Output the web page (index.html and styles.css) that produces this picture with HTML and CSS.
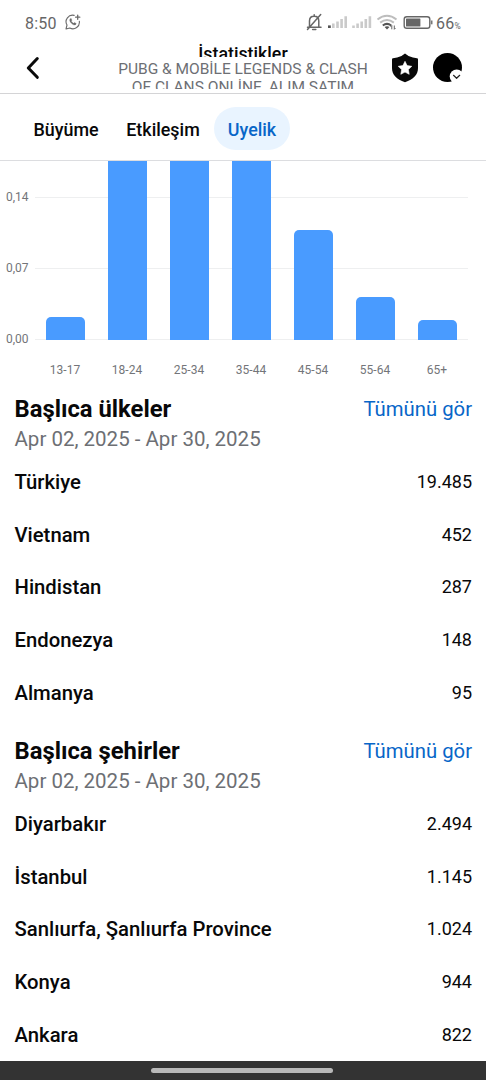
FILE: index.html
```html
<!DOCTYPE html>
<html lang="tr">
<head>
<meta charset="utf-8">
<title>İstatistikler</title>
<link rel="stylesheet" href="styles.css">
</head>
<body>
<div class="screen">
  <div class="status">
    <span class="clock">8:50</span>
    <svg class="wa" width="16" height="16" viewBox="0 0 16 16" fill="none" stroke="#6b6b6b" stroke-width="1.1" stroke-linecap="round" stroke-linejoin="round">
      <path d="M9.2 1.4A6.5 6.5 0 0 0 2 11L1 15l3.800-1A6.500 6.500 0 0 0 14.300 7.200"/>
      <path d="M5.200 4.700c-1 1.100-.5 2.700 1 4.400 1.700 1.800 3.500 2.500 4.700 1.300l.3-.9-1.700-1-.9.800c-1.100-.3-2-1.300-2.300-2.200l.6-.9-.7-1.600z" fill="#6b6b6b" stroke-width=".3"/>
      <path d="M12.700 1.100v4.200M10.600 3.200h4.200" stroke-width="1.300"/>
    </svg>
    <svg class="indicators" width="128" height="20" viewBox="305 13 128 20" fill="none">
      <g stroke="#666" stroke-width="1.500" stroke-linecap="round" stroke-linejoin="round">
        <path d="M309.500 26.600V21c0-3 1.900-4.700 4.600-4.700s4.700 1.700 4.700 4.700v5.200M307.500 27.200H321M314.200 14.700v1.500M320.700 14.500 307.500 29.500"/>
        <path d="M312.600 29.500h3.200"/>
      </g>
      <g fill="#cacaca">
        <path d="M332 23.500h2.600V28H332zM336.200 21.500h2.600V28h-2.600zM340.300 19h2.600v9h-2.600zM344.400 16.200h2.600V28h-2.600z"/>
        <path d="M352.200 25.500h2.600V28h-2.600zM356.300 23.500h2.600V28h-2.600zM360.400 21.500h2.600V28h-2.600zM364.500 19h2.600v9h-2.600zM368.600 16.200h2.600V28h-2.600z"/>
      </g>
      <rect x="328" y="25.400" width="2.800" height="2.600" fill="#555"/>
      <path d="M377.500 19.500q9.500-7.400 19 0" stroke="#bdbdbd" stroke-width="2"/>
      <path d="M380.200 22.600q6.800-5.200 13.600 0" stroke="#bdbdbd" stroke-width="2"/>
      <path d="M382.800 25.500q4.200-3.300 8.400 0" stroke="#555" stroke-width="2"/>
      <path d="M384.600 27q2.500-1.700 4.900 0l-2.500 2.500z" fill="#555"/>
      <path d="M391.800 29.300v-3.800l-1.200 1.300M394.300 25.500v3.800l1.200-1.300" stroke="#666"/>
      <rect x="404.200" y="16.700" width="25.600" height="11.600" rx="2.600" stroke="#666" stroke-width="1.400"/>
      <rect x="406" y="18.500" width="14.400" height="8" rx=".6" fill="#666"/>
      <path d="M431.700 20.500v3.800" stroke="#777" stroke-width="1.600"/>
    </svg>
    <span class="level">66<small>%</small></span>
  </div>

  <header class="header">
    <svg class="back" width="16" height="26" viewBox="0 0 16 26" fill="none" stroke="#0a0a0a" stroke-width="3" stroke-linecap="round" stroke-linejoin="round"><path d="M13.300 3.500 4.300 13l9 9.300"/></svg>
    <div class="titles">
      <div class="title">İstatistikler</div>
      <div class="subtitle">PUBG &amp; MOBİLE LEGENDS &amp; CLASH<br>OF CLANS ONLİNE, ALIM SATIM</div>
    </div>
    <svg class="shield" width="28" height="30" viewBox="0 0 28 30">
      <path d="M14 .5 10.500 3Q6 5 2 5.200 1 5.300 1 6.500V15c0 7 4.500 11 13 14.300C22.500 26 27 22 27 15V6.500Q27 5.300 26 5.200 22 5 17.500 3z" fill="#080808"/>
      <path d="m14 8.300 2.100 4.300 4.700.7-3.400 3.300.8 4.700-4.200-2.200-4.200 2.200.8-4.700-3.400-3.300 4.700-.7z" fill="#fff" stroke="#fff" stroke-width=".6" stroke-linejoin="round"/>
    </svg>
    <svg class="avatar" width="32" height="32" viewBox="0 0 32 32">
      <circle cx="15.500" cy="15.500" r="14.500" fill="#000"/>
      <circle cx="24.700" cy="24.500" r="7" fill="#fff"/>
      <path d="m21.500 23.300 3.100 3 3.100-3" fill="none" stroke="#222" stroke-width="1.200" stroke-linecap="round" stroke-linejoin="round"/>
    </svg>
  </header>

  <nav class="tabs">
    <a class="tab t1"><span>Büyüme</span></a>
    <a class="tab t2"><span>Etkileşim</span></a>
    <a class="tab t3 active"><span>Uyelik</span></a>
  </nav>

  <section class="chart">
    <div class="plot">
      <div class="axis"><span>0,14</span><span>0,07</span><span>0,00</span></div>
      <div class="bars">
        <i style="height:23.500px"></i>
        <i class="cut"></i>
        <i class="cut"></i>
        <i class="cut"></i>
        <i style="height:110px"></i>
        <i style="height:43.500px"></i>
        <i style="height:20px"></i>
      </div>
    </div>
    <div class="ages"><span>13-17</span><span>18-24</span><span>25-34</span><span>35-44</span><span>45-54</span><span>55-64</span><span>65+</span></div>
  </section>

  <section class="list">
    <div class="head"><h2>Başlıca ülkeler</h2><a>Tümünü gör</a></div>
    <p class="range">Apr 02, 2025 - Apr 30, 2025</p>
    <div class="row"><b>Türkiye</b><span>19.485</span></div>
    <div class="row"><b>Vietnam</b><span>452</span></div>
    <div class="row"><b>Hindistan</b><span>287</span></div>
    <div class="row"><b>Endonezya</b><span>148</span></div>
    <div class="row"><b>Almanya</b><span>95</span></div>
  </section>

  <section class="list last">
    <div class="head"><h2>Başlıca şehirler</h2><a>Tümünü gör</a></div>
    <p class="range">Apr 02, 2025 - Apr 30, 2025</p>
    <div class="row"><b>Diyarbakır</b><span>2.494</span></div>
    <div class="row"><b>İstanbul</b><span>1.145</span></div>
    <div class="row"><b>Sanlıurfa, Şanlıurfa Province</b><span>1.024</span></div>
    <div class="row"><b>Konya</b><span>944</span></div>
    <div class="row"><b>Ankara</b><span>822</span></div>
  </section>

  <footer class="navbar"><div class="handle"></div></footer>
</div>
</body>
</html>
```
FILE: styles.css
```css
* { box-sizing: border-box; }
body { margin: 0; background: #fff; font-family: Roboto, "Liberation Sans", sans-serif; color: #080809; }
.screen { width: 486px; height: 1080px; overflow: hidden; display: flex; flex-direction: column; }
.screen > * { flex-shrink: 0; }

.status { height: 43px; display: flex; align-items: center; padding: 3px 24px 0 25px; color: #666; font-size: 16px; }
.clock { letter-spacing: .2px; width: 40px; }
.wa { margin-top: -3px; }
.indicators { margin-left: 224px; }
.level { margin-left: 3px; letter-spacing: .2px; white-space: nowrap; }
.level small { font-size: 8.500px; }

.header { height: 51px; border-bottom: 1px solid #d4d4d6; display: flex; align-items: flex-start; padding-left: 24px; }
.back { margin-top: 12px; }
.titles { width: 256px; margin-left: 75px; height: 46px; overflow: hidden; text-align: center; }
.title { height: 14px; line-height: 21px; overflow: hidden; font-size: 17.800px; font-weight: 500; }
.subtitle { margin-top: 3px; font-size: 15.500px; line-height: 18px; color: #6d6f74; white-space: nowrap; }
.shield { margin: 10px 0 0 20px; }
.avatar { margin: 9px 0 0 13px; }

.tabs { height: 67px; border-bottom: 1px solid #dcdde0; display: flex; align-items: center; padding-left: 18px; font-size: 17.900px; font-weight: 500; }
.tab { height: 43px; border-radius: 22px; display: flex; align-items: center; justify-content: center; margin-top: 3px; padding-top: 1px; }
.t1 { width: 96px; }
.t2 { width: 98px; }
.t3 { width: 76px; margin-left: 2px; }
.active { background: #e9f4ff; color: #0866c8; }

.chart { height: 225px; }
.plot { height: 179px; display: flex; }
.axis { width: 35px; padding-left: 6px; font-size: 12px; color: #737579; line-height: 71.300px; padding-top: .6px; }
.axis span { display: block; }
.bars { width: 433px; display: grid; grid-template-columns: repeat(7, 62px); align-items: end; justify-items: center; background: linear-gradient(#eeeff0, #eeeff0) 0 36px / 100% 1px no-repeat, linear-gradient(#eeeff0, #eeeff0) 0 107px / 100% 1px no-repeat, linear-gradient(#eeeff0, #eeeff0) 0 178px / 100% 1px no-repeat; }
.bars i { width: 38.500px; margin-right: 1px; background: #499bff; border-radius: 5px 5px 0 0; }
.bars .cut { height: 100%; border-radius: 0; }
.ages { margin-left: 34px; display: grid; grid-template-columns: repeat(7, 62px); text-align: center; font-size: 12px; color: #737579; line-height: 14px; padding-top: 23px; }

.list { padding: 8px 14px 0 14.500px; height: 342px; }
.last { height: 332px; }
.head { display: flex; justify-content: space-between; align-items: center; height: 30px; }
.head h2 { margin: 0; font-size: 23.800px; font-weight: 700; }
.head a { font-size: 20.300px; color: #0866c8; padding-bottom: 1px; }
.range { margin: 0; font-size: 20.500px; line-height: 30px; color: #6d6f74; height: 32px; }
.row { height: 52.600px; display: flex; justify-content: space-between; align-items: center; }
.row b { font-size: 20.300px; font-weight: 500; }
.row span { font-size: 18px; padding-bottom: 1px; }

.navbar { margin-top: auto; height: 19px; background: #333; display: flex; justify-content: center; align-items: center; padding-right: 3px; }
.handle { width: 182px; height: 5px; border-radius: 3px; background: #b9b9b9; }
```
